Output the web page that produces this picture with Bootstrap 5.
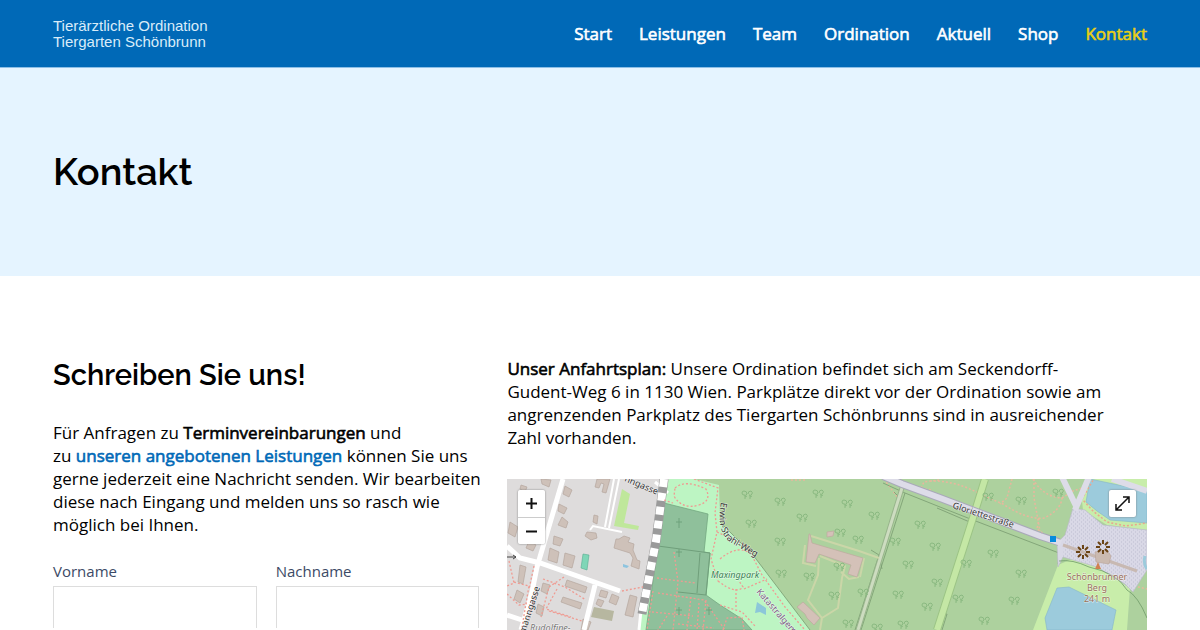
<!DOCTYPE html>
<html lang="de">
<head>
<meta charset="utf-8">
<meta name="viewport" content="width=device-width, initial-scale=1">
<title>Kontakt – Tierärztliche Ordination Tiergarten Schönbrunn</title>
<link href="https://cdn.jsdelivr.net/npm/bootstrap@5.3.0/dist/css/bootstrap.min.css" rel="stylesheet">
<style>
  body { font-family: "Open Sans", "Noto Sans", sans-serif; font-size: 17px; line-height: 23px; color: #000; }
  .page-x { padding-left: 53px; padding-right: 53px; }
  .site-header { background: #0069b7; min-height: 68px; border-bottom: 1px solid #8dbfe6; }
  .site-logo { font: 15px/16px "Liberation Sans", Arial, sans-serif; color: #d9ecf9; }
  .site-nav { gap: 27px; }
  .site-nav .nav-link { color: #fff; padding: 0; }
  .site-nav .nav-link.active { color: #e9cf15; }
  .strong-text, .site-nav .nav-link { font-weight: 400; -webkit-text-stroke: .6px currentColor; }
  .hero { background: #e5f4ff; padding-top: 80px; padding-bottom: 80px; }
  h1, h2 { font-family: Raleway, "Open Sans", sans-serif; font-weight: 600; margin: 0; }
  h1 { font-size: 38px; line-height: 48px; }
  h2 { font-size: 29px; line-height: 36px; }
  .contact-grid { display: grid; grid-template-columns: 2fr 3fr; column-gap: 28px; padding-top: 81px; }
  .intro { margin: 28px -12px 23px 0; }
  .directions { margin: 0 32px 30px 0; }
  .text-link { color: #0069b7; text-decoration: none; }
  .field-row { display: grid; grid-template-columns: 1fr 1fr; gap: 19px; }
  .field-row label { font-size: 15px; line-height: 20px; color: #3c4a66; margin-bottom: 5px; }
  .field-row .form-control { height: 42px; border: 1px solid #ddd; border-radius: 0; }
  .map-box { min-height: 151px; background: #add19e; }
  .map-box svg.map-art { position: absolute; inset: 0; width: 100%; height: 100%; display: block; }
  .map-btn { width: 27px; height: 27px; padding: 0; border: 0; background: #fff; color: #111; display: flex; align-items: center; justify-content: center; }
  .map-zoom { top: 11px; left: 11px; border-radius: 2px; overflow: hidden; box-shadow: 0 0 2px #777; }
  .map-zoom .map-btn + .map-btn { border-top: 1px solid #ccc; }
  .map-full { top: 11px; right: 11px; border-radius: 2px; box-shadow: 0 0 2px #777; }
  .map-art text { font-family: "Noto Sans", sans-serif; paint-order: stroke; stroke: #ffffffa0; stroke-width: 1px; }
</style>
</head>
<body class="vh-100 overflow-hidden d-flex flex-column">
<header class="site-header page-x d-flex justify-content-between align-items-center flex-shrink-0">
  <a class="site-logo text-decoration-none" href="#">Tierärztliche Ordination<br>Tiergarten Schönbrunn</a>
  <nav class="nav site-nav flex-nowrap" aria-label="Hauptmenü">
    <a class="nav-link" href="#">Start</a>
    <a class="nav-link" href="#">Leistungen</a>
    <a class="nav-link" href="#">Team</a>
    <a class="nav-link" href="#">Ordination</a>
    <a class="nav-link" href="#">Aktuell</a>
    <a class="nav-link" href="#">Shop</a>
    <a class="nav-link active" aria-current="page" href="#">Kontakt</a>
  </nav>
</header>
<section class="hero page-x flex-shrink-0"><h1>Kontakt</h1></section>
<main class="contact-grid page-x flex-grow-1">
  <section>
    <h2>Schreiben Sie uns!</h2>
    <p class="intro">Für Anfragen zu <span class="strong-text">Terminvereinbarungen</span> und zu&nbsp;<a class="text-link strong-text" href="#">unseren angebotenen Leistungen</a> können Sie uns gerne jederzeit eine Nachricht senden. Wir bearbeiten diese nach Eingang und melden uns so rasch wie möglich bei Ihnen.</p>
    <form class="field-row">
      <div><label for="vorname">Vorname</label><input class="form-control border-bottom-0" id="vorname" type="text"></div>
      <div><label for="nachname">Nachname</label><input class="form-control border-bottom-0" id="nachname" type="text"></div>
    </form>
  </section>
  <section class="d-flex flex-column">
    <p class="directions"><span class="strong-text">Unser Anfahrtsplan:</span> Unsere Ordination befindet sich am Seckendorff-Gudent-Weg 6 in 1130 Wien. Parkplätze direkt vor der Ordination sowie am angrenzenden Parkplatz des Tiergarten Schönbrunns sind in ausreichender Zahl vorhanden.</p>
    <div class="map-box position-relative flex-grow-1 overflow-hidden">
      <svg class="map-art" viewBox="0 0 640 151" preserveAspectRatio="xMinYMin slice" role="img" aria-label="Karte">
        <defs>
          <g id="tree" fill="none" stroke="#8ab981" stroke-width="1"><path d="M-2 4V0M-5-2Q-5-4-3-4Q0-4 0-1Q-1 1-3 0Q-5 0-5-2M3 4V0M1-1Q1-4 4-4Q6-3 5-1Q4 1 2 0M-2 2L0 1M3 2L5 1"/></g>
          <g id="star" stroke="#6b4414" stroke-width="2"><path d="M0-3V-7M0 3V7M3 0H7M-3 0H-7M2-2L5-5M-2-2L-5-5M2 2L5 5M-2 2L-5 5"/></g>
          <pattern id="dots" width="4" height="4" patternUnits="userSpaceOnUse"><path d="M0 1h1M2 3h1" stroke="#bdbdd0"/></pattern>
        </defs>
        <!-- land use -->
        <rect width="640" height="151" fill="#add19e"/>
        <path fill="#dedcdc" d="M0 0H162L131 151H0Z"/>
        <path fill="#bdf5c3" d="M162 0H187L212 6L213 43L246 76L303 151H131Z"/>
        <path fill="#8fc09b" stroke="#74a780" stroke-width=".8" d="M157 24L201 35L197 73L203 74L199 116L213 126L235 140L245 151H139L151 67Z"/>
        <path fill="none" stroke="#709f7b" d="M151 67L203 74L199 116L171 113M193 74L190 114"/>
        <path fill="#bfe79b" d="M115 10L123 15L117 44L132 47L131 51L107 47Z"/>
        <path fill="#7fd6b7" stroke="#58ad91" stroke-width=".6" d="M76 75L82 76L80 91L74 89Z"/>
        <!-- buildings -->
        <g fill="#cec1b9" stroke="#b5a69e" stroke-width=".7">
          <path d="M34 0L44 1L42 8L35 5ZM58 7L65 11L62 18L56 15ZM52 25L60 29L57 35L51 32ZM55 38L61 43L59 49L51 46ZM47 57L56 60L53 67L46 65ZM43 69L52 73L50 84L41 81ZM58 74L68 77L65 89L56 86ZM90 0H103L99 14L95 13L97 5L94 4L92 9L88 8ZM87 36L91 37L90 45L86 43ZM80 53L89 54L90 59L84 61L78 57ZM3 43L11 48L8 58L1 54ZM22 62L29 66L26 72L19 69ZM14 6L20 8L18 13L13 10Z"/>
          <path d="M112 60L117 57L123 59L121 63L127 65L126 71L130 81L133 82L132 90L124 87L126 79L123 74L107 69L109 60ZM13 86L19 88L16 105L11 103ZM10 111L17 115L13 124L7 120ZM36 104L43 106L40 115L34 112ZM60 101L80 108L78 114L58 107ZM56 118L75 124L73 130L54 123ZM94 111L101 113L99 119L92 117ZM105 115L112 118L109 126L102 123ZM123 116L130 118L126 138L118 136ZM91 120L97 122L94 128L89 125ZM76 140L84 143L81 151H74ZM31 125L37 128L35 137L29 134Z"/>
        </g>
        <path fill="#b7b7a0" d="M87 128L107 132L105 142L84 138Z"/>
        <path fill="#8dc4df" d="M116 85L122 87L120 89L116 88Z"/>
        <!-- streets -->
        <g fill="none" stroke="#fff" stroke-width="5">
          <path d="M56 0L30 88L25 113L14 151M0 67L13 79L33 84L113 112M88 106L77 151M0 136L15 141"/>
          <path stroke-width="2" d="M107 0L98 48M112 0L102 49M83 51L86 47L115 53"/>
          <path stroke-width="3" d="M136 112L132 151M148 3L161 14"/>
        </g>
        <path d="M157 0L149 62L135 135" stroke="#9a9a9a" stroke-width="9" fill="none"/>
        <path d="M157 0L149 62L135 135" stroke="#fff" stroke-width="8" stroke-dasharray="8 6" fill="none"/>
        <path d="M0 78H9M6 76L9 78L6 80" fill="none" stroke="#444"/>
        <!-- footpaths -->
        <g fill="none" stroke="#ef9b92" stroke-width="1.3" stroke-dasharray="2 2">
          <path d="M2 82L7 104L0 107M27 87L22 110M7 103L22 107L15 148M0 115L12 126L20 125M57 98L42 108L34 138M36 100L58 108L79 121M50 110L39 130L64 138M42 132L75 142M115 112L136 108M29 115L22 139"/>
          <path d="M150 99L188 104M167 73L171 103L166 151M146 112L140 151M151 114L197 121L218 151M145 133L186 137M184 118L180 151M192 124L190 151M199 121L196 151M160 137L151 151M171 145L207 149"/>
          <path d="M168 9Q178 0 199 10Q205 22 192 26Q175 31 167 17ZM187 0L211 9L208 34L210 53L204 80L211 102M157 21L166 24M210 53L240 67L255 96L278 128L298 151M213 80Q232 64 245 76M211 102Q229 116 236 108L232 102M229 110L229 128M237 110L260 100M213 126L235 133L248 147M216 151L220 139L235 138L237 151"/>
        </g>
        <g fill="none" stroke="#e8b79d" stroke-width="1.5" stroke-dasharray="2 2">
          <path d="M284 1H300M377 0L391 19M414 9L417 3L432 1M414 9L424 11M423 2Q449 1 477 17L496 25Q520 41 537 39Q554 31 555 19Q536 18 526 0M505 0L500 19L493 25M527 0L527 19L533 52M555 19L566 12L575 9M588 0L575 18L586 31L600 42L619 45L640 42M532 39L530 50L537 55M606 48L612 43M627 107L640 110"/>
        </g>
        <path fill="none" stroke="#799b70" stroke-width=".8" d="M213 43L246 76L303 151M376 4L398 14L433 28L466 41L552 74L551 85M398 14L354 151M387 13L393 19M348 151L372 76L364 71M372 76L375 90M430 29L465 44L433 134M433 134L440 135L435 151"/>
        <path stroke="#98b58c" stroke-width="5" fill="none" d="M395 9L351 151"/>
        <path stroke="#cddcc0" stroke-width="3" fill="none" d="M395 9L351 151"/>
        <path stroke="#9cc485" stroke-width="8" fill="none" d="M478 0L465 42L430 151"/>
        <path stroke="#c4e7a5" stroke-width="6" fill="none" d="M478 0L465 42L430 151"/>
        <!-- Maxing stables -->
        <path fill="none" stroke="#cbd6a8" stroke-width="2" d="M304 57L352 72L372 79M298 66L296 84L309 87M352 98L342 100L334 93M357 79L353 98M312 79L311 96L301 121L315 139L331 129L335 99L338 87L313 77M315 139L313 151"/>
        <path fill="#d4c1b8" stroke="#bfa99f" stroke-width=".7" d="M303 55L305 64L356 79L350 98L341 95L344 86L312 75L308 84L299 83L302 55ZM290 128L296 123L313 139L307 146L300 139L298 135ZM320 53L327 52L326 57L320 58Z"/>
        <path fill="#8cc7d9" d="M250 123L259 129L259 136L253 133L248 134Z"/>
        <g>
          <use href="#tree" x="240" y="16"/><use href="#tree" x="273" y="23"/><use href="#tree" x="311" y="15"/><use href="#tree" x="340" y="25"/><use href="#tree" x="295" y="39"/><use href="#tree" x="367" y="37"/><use href="#tree" x="244" y="45"/><use href="#tree" x="273" y="63"/><use href="#tree" x="351" y="61"/><use href="#tree" x="413" y="46"/><use href="#tree" x="388" y="63"/><use href="#tree" x="274" y="95"/><use href="#tree" x="302" y="98"/><use href="#tree" x="401" y="86"/><use href="#tree" x="428" y="68"/><use href="#tree" x="327" y="117"/><use href="#tree" x="356" y="114"/><use href="#tree" x="391" y="116"/><use href="#tree" x="420" y="128"/><use href="#tree" x="341" y="145"/><use href="#tree" x="370" y="149"/><use href="#tree" x="396" y="146"/><use href="#tree" x="430" y="104"/><use href="#tree" x="514" y="22"/><use href="#tree" x="551" y="14"/><use href="#tree" x="486" y="75"/><use href="#tree" x="459" y="85"/><use href="#tree" x="514" y="95"/><use href="#tree" x="451" y="120"/><use href="#tree" x="507" y="122"/><use href="#tree" x="477" y="142"/><use href="#tree" x="481" y="18"/><use href="#tree" x="333" y="54"/><use href="#tree" x="332" y="88"/>
        </g>
        <path d="M172 39V49M169 43H175M172 70V78M169 73H175M172 128V136M169 131H175M202 128V136M199 131H205" stroke="#6fa27c" fill="none"/>
        <!-- Gloriette hill -->
        <path fill="#c8edaa" d="M583 0H640V51L600 46L576 31L575 22ZM551 86L565 80L590 88L623 109L620 151H526Z"/>
        <path fill="#9ccbdc" stroke="#85b5c9" stroke-width=".6" d="M583 0L640 12V44L603 41L590 32L579 23ZM550 109L562 108L609 131L605 151H540L538 139Z"/>
        <path fill="none" stroke="#e8a58f" stroke-width="1.5" stroke-dasharray="2 2" d="M588 -2L575 20L586 32L600 43L619 47L640 44"/>
        <path fill="#d9d8e6" stroke="#b9b8c6" stroke-width=".6" d="M566 29L578 31L596 46L640 51V91L626 113L618 105L590 88L556 78L551 88L550 64L558 56Z"/>
        <path fill="url(#dots)" d="M566 29L578 31L596 46L640 51V91L626 113L590 88L556 78L558 56Z"/>
        <path fill="none" stroke="#a9a9b9" stroke-width="8" d="M376 -3L395 5L433 19L533 57L552 63"/>
        <path fill="none" stroke="#dddce8" stroke-width="6" d="M376 -3L395 5L433 19L533 57L554 64M555 -2L570 29M582 -2L568 31M605 0L640 12"/>
        <path fill="none" stroke="#c8b9b2" stroke-width="3" d="M556 66L630 92"/>
        <path fill="#cbbab0" stroke="#b8a398" stroke-width=".6" d="M588 73L600 71L604 77L602 85L589 83Z"/>
        <path fill="none" stroke="#6f9a68" stroke-width=".8" d="M552 82Q565 80 582 88Q610 94 620 111Q631 117 640 139"/>
        <path fill="none" stroke="#9ccbdc" stroke-width="3" d="M638 77Q636 85 640 90"/>
        <use href="#star" x="576" y="73"/><use href="#star" x="596" y="68"/>
        <path fill="#d08050" d="M591 83L594 90H588Z"/>
        <rect x="543" y="57" width="6" height="6" fill="#078bdc"/>
        <!-- labels -->
        <g font-size="9" fill="#333">
          <text transform="translate(117 2) rotate(23)">nngasse</text>
          <text transform="translate(18 155) rotate(-72)">manngasse</text>
          <path id="erwin" fill="none" d="M214 23Q208 55 226 65L256 82"/>
          <text><textPath href="#erwin">Erwin-Strahl-Weg</textPath></text>
          <text transform="translate(445 29) rotate(18)">Gloriettestraße</text>
          <text x="23" y="152" fill="#777" font-style="italic">Rudolfine-</text>
          <text x="204" y="99" fill="#388052" font-style="italic">Maxingpark</text>
          <text transform="translate(249 113) rotate(49)" fill="#7c5a86">Katastralgemeinde</text>
          <g fill="#98705a" text-anchor="middle"><text x="590" y="101">Schönbrunner</text><text x="590" y="112">Berg</text><text x="590" y="123">241 m</text></g>
        </g>
      </svg>
      <div class="map-zoom position-absolute">
        <button class="map-btn" type="button" aria-label="Vergrößern"><svg width="11" height="11" viewBox="0 0 11 11"><path d="M5.500 0V11M0 5.500H11" stroke="#111" stroke-width="2"/></svg></button>
        <button class="map-btn" type="button" aria-label="Verkleinern"><svg width="11" height="11" viewBox="0 0 11 11"><path d="M0 5.500H11" stroke="#111" stroke-width="2"/></svg></button>
      </div>
      <button class="map-btn map-full position-absolute" type="button" aria-label="Vollbild"><svg width="17" height="17" viewBox="0 0 17 17" fill="none" stroke="#111" stroke-width="1.500"><path d="M2 15L15 2M9 2H15V8M2 9V15H8"/></svg></button>
    </div>
  </section>
</main>
<script src="https://cdn.jsdelivr.net/npm/bootstrap@5.3.0/dist/js/bootstrap.bundle.min.js"></script>
</body>
</html>
